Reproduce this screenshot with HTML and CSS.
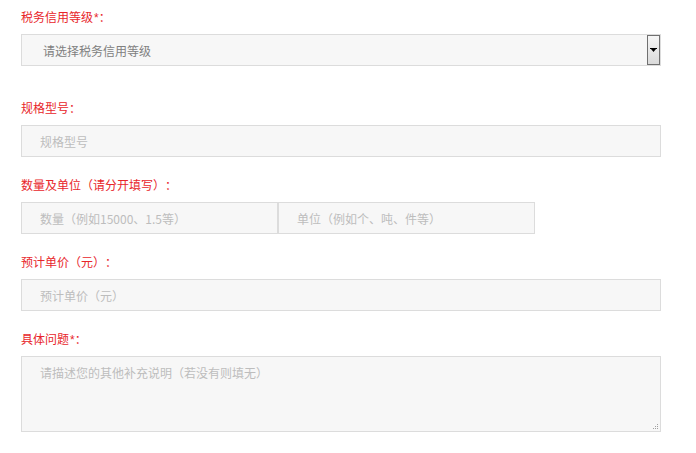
FILE: index.html
```html
<!DOCTYPE html>
<html lang="zh-CN">
<head>
<meta charset="utf-8">
<title>表单</title>
<link rel="stylesheet" href="styles.css">
</head>
<body>
<form class="form">
  <div class="field field-first">
    <label class="label">税务信用等级<span class="star">*</span>：</label>
    <div class="select-box">
      <select class="select">
        <option>请选择税务信用等级</option>
      </select>
      <span class="select-btn">
        <svg width="7" height="4" viewBox="0 0 7 4"><rect x="0" y="0" width="7" height="1" fill="#000"/><polygon points="1,1 6,1 3.5,4" fill="#000"/></svg>
      </span>
    </div>
  </div>
  <div class="field">
    <label class="label">规格型号：</label>
    <input class="input" type="text" placeholder="规格型号">
  </div>
  <div class="field">
    <label class="label">数量及单位（请分开填写）：</label>
    <div class="pair">
      <input class="input half" type="text" placeholder="数量（例如15000、1.5等）">
      <input class="input half" type="text" placeholder="单位（例如个、吨、件等）">
    </div>
  </div>
  <div class="field">
    <label class="label">预计单价（元）：</label>
    <input class="input" type="text" placeholder="预计单价（元）">
  </div>
  <div class="field">
    <label class="label">具体问题<span class="star">*</span>：</label>
    <div class="textarea-wrap">
      <textarea class="textarea" placeholder="请描述您的其他补充说明（若没有则填无）"></textarea>
      <svg class="grip" width="6" height="6" viewBox="0 0 6 6">
        <rect x="5" y="1" width="1" height="1" fill="#a0a0a0"/>
        <rect x="3" y="3" width="1" height="1" fill="#a0a0a0"/>
        <rect x="5" y="3" width="1" height="1" fill="#a0a0a0"/>
        <rect x="1" y="5" width="1" height="1" fill="#a0a0a0"/>
        <rect x="3" y="5" width="1" height="1" fill="#a0a0a0"/>
        <rect x="5" y="5" width="1" height="1" fill="#a0a0a0"/>
      </svg>
    </div>
  </div>
</form>
</body>
</html>
```

FILE: styles.css
```css
html, body {
  margin: 0;
  padding: 0;
  background: #fff;
}
body {
  font-family: "Microsoft YaHei", "Noto Sans CJK SC", "Liberation Sans", sans-serif;
  font-size: 12px;
  text-spacing-trim: space-all;
}
.form {
  display: flex;
  flex-direction: column;
  gap: 18px;
  padding: 7px 0 0 21px;
  width: 640px;
}
.field {
  display: flex;
  flex-direction: column;
  gap: 7px;
}
.field-first {
  margin-bottom: 14px;
}
.label {
  color: #e8262b;
  font-size: 12px;
  line-height: 20px;
  height: 20px;
}
.star {
  font-family: "Liberation Sans", sans-serif;
  margin-left: 1px;
}
.select-box {
  display: flex;
  box-sizing: border-box;
  width: 640px;
  height: 32px;
  border: 1px solid #dcdcdc;
  background: #f7f7f7;
}
.select {
  flex: 1;
  appearance: none;
  -webkit-appearance: none;
  border: 0;
  outline: 0;
  background: transparent;
  font-family: inherit;
  font-size: 12px;
  color: #808080;
  padding: 0 0 0 21px;
  margin: 0;
  height: 30px;
}
.select-btn {
  box-sizing: border-box;
  width: 13px;
  height: 30px;
  border: 1px solid #707070;
  background: linear-gradient(#f6f6f6, #dadada);
  display: flex;
  align-items: center;
  justify-content: center;
}
.select-btn svg {
  display: block;
}
.input {
  box-sizing: border-box;
  width: 640px;
  height: 32px;
  border: 1px solid #dcdcdc;
  background: #f7f7f7;
  padding: 0 0 0 18px;
  margin: 0;
  font-family: inherit;
  font-size: 12px;
  color: #555;
  outline: 0;
}
.input::placeholder,
.textarea::placeholder {
  color: #bdbdbd;
}
.pair {
  display: flex;
}
.half {
  width: 257px;
}
.textarea-wrap {
  position: relative;
  width: 640px;
}
.textarea {
  box-sizing: border-box;
  width: 640px;
  height: 76px;
  border: 1px solid #dcdcdc;
  background: #f7f7f7;
  padding: 6px 18px;
  margin: 0;
  font-family: inherit;
  font-size: 12px;
  line-height: 20px;
  color: #555;
  outline: 0;
  display: block;
  resize: none;
}
.grip {
  position: absolute;
  right: 3px;
  bottom: 3px;
  display: block;
}
```
